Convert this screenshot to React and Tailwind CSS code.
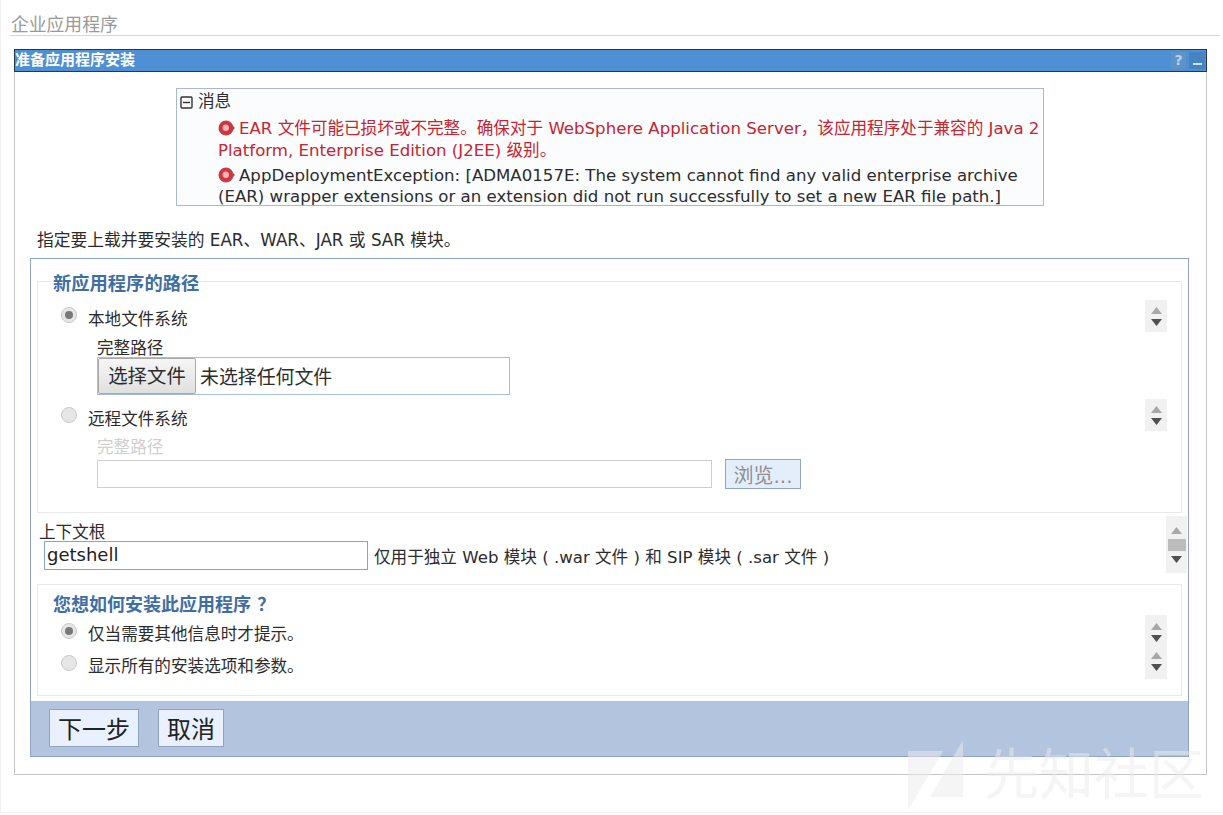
const FONT = "font-['DejaVu_Sans','Noto_Sans_CJK_SC',sans-serif]";

function ErrorIcon() {
  return (
    <svg width="17" height="16" viewBox="0 0 17 16" className="inline-block shrink-0 align-[-2px]">
      <path d="M14 5 L17 8 L14 11 Z" fill="#666" />
      <circle cx="8" cy="8" r="7.5" fill="#b8454c" />
      <circle cx="7.8" cy="7.8" r="6" fill="#d8303c" />
      <circle cx="7.8" cy="7.8" r="3.2" fill="#f2b4b9" />
    </svg>
  );
}

function Radio({ checked }) {
  return (
    <span className="w-[16px] h-[16px] rounded-full bg-[#e6e6e6] border border-[#c8c8c8] flex items-center justify-center shrink-0">
      {checked && <span className="w-[8px] h-[8px] rounded-full bg-[#787878]" />}
    </span>
  );
}

function Arrows({ extra }) {
  return (
    <div className="flex flex-col items-center gap-[5px]">
      <svg width="11" height="7" viewBox="0 0 11 7"><path d="M5.5 0 L11 7 H0 Z" fill="#a8a8a8" /></svg>
      {extra}
      <svg width="11" height="7" viewBox="0 0 11 7"><path d="M0 0 H11 L5.5 7 Z" fill="#505050" /></svg>
    </div>
  );
}

function Spinner({ className }) {
  return (
    <div className={`w-[22px] bg-[#f1f1f1] flex flex-col items-center justify-center ${className}`}>
      <Arrows />
    </div>
  );
}

function RadioRow({ checked, label, className, textClass = "translate-y-[4px]" }) {
  return (
    <div className={`flex items-center pl-[23px] ${className}`}>
      <Radio checked={checked} />
      <span className={`ml-[11px] text-[16.6px] leading-[24px] text-[#2c2c2c] ${textClass}`}>{label}</span>
    </div>
  );
}

export default function App() {
  return (
    <div className={`${FONT} relative w-[1223px] h-[815px] overflow-hidden bg-white pt-[13px] pl-[10px] pr-[3px]`}>
      <div className="h-[23px] border-b border-[#d6d6d6] text-[17.8px] leading-[23px] text-[#9a9a9a] pl-[1px]">
        企业应用程序
      </div>

      <div className="mt-[13px] ml-[4px] w-[1193px] h-[726px] border-x border-b border-[#c6c6c6]">
        <div className="-mx-px h-[23px] bg-[#4f8fd3] border border-[#26384a] flex items-center justify-between pr-[1px]">
          <span className="text-[15px] font-bold text-white leading-[21px]">准备应用程序安装</span>
          <div className="flex gap-[3px]">
            <span className="w-[15px] h-[17px] bg-[#5e93c8] text-[#b9d2ea] text-[14px] font-bold leading-[17px] text-center">?</span>
            <span className="w-[16px] h-[17px] bg-[#4783c2] flex items-end justify-center pb-[4px]">
              <span className="w-[9px] h-[2px] bg-[#cfe0f2]" />
            </span>
          </div>
        </div>

        <div className="mt-[16px] ml-[161px] w-[868px] h-[118px] border border-[#aab6d2] bg-[#fbfcfe] pl-[3px] text-[16.6px]">
          <div className="flex items-center h-[24px] mt-[1px] text-[#2c2c2c]">
            <svg width="13" height="13" viewBox="0 0 13 13" className="mr-[5px]">
              <rect x="1" y="1" width="11" height="11" rx="1" fill="none" stroke="#333" strokeWidth="1.4" />
              <path d="M3 6.5 H10" stroke="#333" strokeWidth="1.4" />
            </svg>
            消息
          </div>
          <div className="ml-[38px] w-[826px]">
            <p className="text-[#c8232f] mt-[4px] leading-[22px]">
              <ErrorIcon /><span className="ml-[4px]">EAR 文件可能已损坏或不完整。确保对于 WebSphere Application Server，该应用程序处于兼容的 Java 2 Platform, Enterprise Edition (J2EE) 级别。</span>
            </p>
            <p className="text-[#2c2c2c] mt-[3px] leading-[21px]">
              <ErrorIcon /><span className="ml-[4px]">AppDeploymentException: [ADMA0157E: The system cannot find any valid enterprise archive (EAR) wrapper extensions or an extension did not run successfully to set a new EAR file path.]</span>
            </p>
          </div>
        </div>

        <p className="mt-[22px] ml-[22px] text-[16.75px] leading-[24px] text-[#2c2c2c]">
          指定要上载并要安装的 EAR、WAR、JAR 或 SAR 模块。
        </p>

        <div className="mt-[6px] ml-[15px] w-[1159px] h-[499px] border border-[#8ea3c6] flex flex-col">
          <div className="mt-[22px] ml-[6px] w-[1145px] h-[232px] border border-[#e8e8e8] relative">
            <div className="-mt-[10px] flex">
              <span className="ml-[14px] px-px bg-white text-[18.3px] font-bold leading-[24px] text-[#3f6ea5]">新应用程序的路径</span>
            </div>

            <div className="flex items-start justify-between pr-[14px] mt-[4px]">
              <RadioRow checked label="本地文件系统" className="pt-[3px]" textClass="translate-y-[5px]" />
              <Spinner className="h-[32px]" />
            </div>
            <div className="pl-[59px] -mt-[1px]">
              <div className="text-[16.6px] leading-[22px] text-[#2c2c2c] mt-[6px] translate-y-[1px]">完整路径</div>
              <div className="mt-[-2px] w-[413px] h-[38px] border border-[#a5bfdc] flex items-center text-[18.9px] text-[#2c2c2c]">
                <span className="h-[36px] w-[98px] border border-[#a8a8a8] bg-gradient-to-b from-[#f6f6f6] to-[#e0e0e0] flex items-center justify-center text-[19.4px] rounded-[2px]"><span className="translate-y-[1px]">选择文件</span></span>
                <span className="ml-[4px] translate-y-[1px]">未选择任何文件</span>
              </div>
            </div>

            <div className="flex items-start justify-between pr-[14px] mt-[4px]">
              <RadioRow label="远程文件系统" className="pt-[4px]" textClass="translate-y-[5px]" />
              <Spinner className="h-[32px]" />
            </div>
            <div className="pl-[59px] -mt-[1px]">
              <div className="text-[16.6px] leading-[22px] text-[#cfcfcf] mt-[7px]">完整路径</div>
              <div className="mt-0 flex items-center">
                <div className="w-[615px] h-[28px] border border-[#cfcfcf] bg-white" />
                <span className="ml-[13px] w-[76px] h-[30px] border border-[#8fa6c6] bg-[#e4eefb] text-[#8f8f8f] text-[20px] leading-[33px] text-center">浏览...</span>
              </div>
            </div>
          </div>

          <div className="flex justify-between pr-[1px] mt-[3px] ml-[8px]">
            <div>
              <div className="text-[16.6px] leading-[22px] text-[#2c2c2c] mt-[4px] translate-y-[2px]">上下文根</div>
              <div className="flex items-center -mt-[1px]">
                <div className="ml-[5px] w-[324px] h-[29px] border border-[#7fa5d0] bg-white text-[18px] leading-[25px] text-[#222] pl-[2px]">getshell</div>
                <span className="ml-[6px] text-[16.6px] text-[#2c2c2c] translate-y-[3px]">仅用于独立 Web 模块 ( .war 文件 ) 和 SIP 模块 ( .sar 文件 )</span>
              </div>
            </div>
            <div className="w-[21px] h-[57px] bg-[#f1f1f1] flex flex-col items-center justify-center">
              <Arrows extra={<span className="w-[18px] h-[12px] bg-[#bcbcbc]" />} />
            </div>
          </div>

          <div className="mt-[11px] ml-[6px] w-[1145px] h-[112px] border border-[#e8e8e8]">
            <div className="pl-[15px] pt-[8px] text-[18px] font-bold leading-[24px] text-[#3f6ea5]">您想如何安装此应用程序 ？</div>
            <div className="flex justify-between pr-[14px]">
              <div className="mt-[2px]">
                <RadioRow checked label="仅当需要其他信息时才提示。" className="h-[24px]" />
                <RadioRow label="显示所有的安装选项和参数。" className="h-[24px] mt-[8px]" />
              </div>
              <div className="mt-[-2px] w-[22px] h-[64px] bg-[#f1f1f1] flex flex-col items-center justify-center gap-[10px]">
                <Arrows />
                <Arrows />
              </div>
            </div>
          </div>

          <div className="mt-[5px] flex-1 bg-[#b3c4de] flex items-start pl-[18px] pt-[8px] gap-[19px]">
            <span className="w-[90px] h-[38px] border border-[#8ea3c6] bg-[#e8f1fd] text-[24px] leading-[41px] text-center text-[#222]">下一步</span>
            <span className="w-[66px] h-[38px] border border-[#8ea3c6] bg-[#e8f1fd] text-[24px] leading-[41px] text-center text-[#222]">取消</span>
          </div>
        </div>
      </div>

      <div className="absolute left-0 top-0 bottom-[2px] w-[1px] bg-[#f0f0f0]" />
      <div className="absolute left-0 right-0 bottom-[2px] h-[1px] bg-[#f0f0f0]" />

      <div className="absolute left-[908px] top-[740px] w-[310px] h-[72px] flex items-start opacity-50 pointer-events-none">
        <svg width="56" height="70" viewBox="0 0 56 70" className="shrink-0">
          <path d="M0 11 H35 L0 70 Z M55 0 V57 H22 Z" fill="#ececec" />
        </svg>
        <span className="ml-[20px] mt-[3px] text-[55px] leading-[64px] text-[#ececec] whitespace-nowrap">先知社区</span>
      </div>
    </div>
  );
}
